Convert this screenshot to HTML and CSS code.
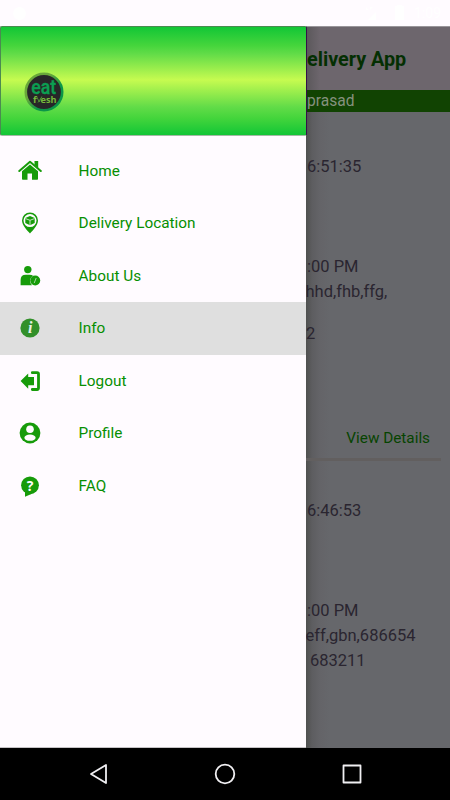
FILE: index.html
```html
<!DOCTYPE html>
<html lang="en">
<head>
<meta charset="utf-8">
<title>Delivery App</title>
<link rel="stylesheet" href="styles.css">
</head>
<body>
<div class="status">
  <i class="dot"></i>
  <svg class="signals" viewBox="0 0 44 20"><path d="M2 4v3h3M6 7V4h3M12 9v8H4zM31 3v14h9V3h-2V2h-5v1z"/></svg>
  <span>1:09</span>
</div>
<div class="screen">
  <aside class="drawer">
    <header class="banner">
      <svg class="logo" viewBox="0 0 40 40">
        <defs><linearGradient id="ring" x1="0" y1="0" x2="1" y2="1"><stop offset=".35" stop-color="#69a83a"/><stop offset=".65" stop-color="#0b9648"/></linearGradient></defs>
        <circle cx="20" cy="20" r="18.2" fill="#272628" stroke="url(#ring)" stroke-width="2.6"/>
        <text class="eat" x="7.300" y="21.600" textLength="24.800" lengthAdjust="spacingAndGlyphs">eat</text>
        <text class="fresh" x="9" y="31">f</text>
        <text class="fresh" x="16.500" y="31" textLength="16" lengthAdjust="spacingAndGlyphs">esh</text>
        <path d="M12.800 25l2.500 5 2.500-5.500M14 30.500l3.500-5" fill="none" stroke="#4c8a35" stroke-width="1"/>
      </svg>
    </header>
    <nav class="menu">
      <a class="item"><svg viewBox="0 0 24 24"><path d="M4 12.300v7.700q0 .8.800.8h4.700v-6.300h4.500v6.300h5.200q.8 0 .8-.8v-7.700L12 5.500z"/><path d="M16.500 2h3.700v7.500L16.500 6z"/><path d="M1.300 12L12 2.800 22.800 12" fill="none" stroke="#179b0a" stroke-width="2" stroke-linecap="round" stroke-linejoin="round"/></svg><span>Home</span></a>
      <a class="item"><svg viewBox="0 0 24 24"><path fill-rule="evenodd" d="M12 1.400a8 8 0 0 0-8 8c0 5 5.500 10 8 13 2.500-3 8-8 8-13a8 8 0 0 0-8-8zm0 1.700a6.500 6.500 0 1 1 0 13 6.500 6.500 0 0 1 0-13z"/><path d="M12 5l4.700 1.900v5L12 14.300l-4.700-2.400v-5z"/><path d="M7.300 7.500L12 9.300l4.700-1.800M12 9.300v5" fill="none" stroke="#d5efd2" stroke-width=".9"/></svg><span>Delivery Location</span></a>
      <a class="item"><svg viewBox="0 0 24 24"><circle cx="9.800" cy="5.600" r="3.700"/><path d="M2.600 21.200V16q0-5.300 5.200-5.300h3.700q2.500 0 3.800 1.400-3.300 1.500-3.300 4.800 0 2.500 2 4.300z"/><circle cx="17.200" cy="16.500" r="5"/><path d="M18.200 14l-2 5" stroke="#a5d89f" stroke-width="1"/></svg><span>About Us</span></a>
      <a class="item selected"><svg viewBox="0 0 24 24"><circle cx="12" cy="12" r="9.600"/><text class="info" x="12.200" y="17.300">i</text></svg><span>Info</span></a>
      <a class="item"><svg viewBox="0 0 24 24"><path d="M2.600 12l7.600-7.600v3.600h5.800v8.200h-5.800v3.600z"/><path d="M14.300 3.700h4.800q1.400 0 1.400 1.400v14q0 1.400-1.400 1.400h-4.800" fill="none" stroke="#179b0a" stroke-width="2.800" stroke-linecap="round"/></svg><span>Logout</span></a>
      <a class="item"><svg viewBox="0 0 24 24"><circle cx="12" cy="12" r="10.400"/><circle cx="12" cy="8.300" r="3.800" fill="#fffbff"/><ellipse cx="12" cy="16.700" rx="5.600" ry="3.100" fill="#fffbff"/></svg><span>Profile</span></a>
      <a class="item"><svg viewBox="0 0 24 24"><circle cx="12" cy="11.300" r="8.900"/><path d="M7 17.500v5.200l7-3z"/><text class="question" x="12" y="16.700">?</text></svg><span>FAQ</span></a>
    </nav>
  </aside>
  <main class="page">
    <h1>elivery App</h1>
    <div class="user">prasad</div>
    <section class="order first">
      <p class="time">6:51:35</p>
      <p class="slot">:00 PM</p>
      <p class="tight">hhd,fhb,ffg,</p>
      <p class="pin">2</p>
      <a class="details">View Details</a>
    </section>
    <section class="order">
      <p class="time">6:46:53</p>
      <p class="slot">:00 PM</p>
      <p class="tight">eff,gbn,686654</p>
      <p class="indent">683211</p>
    </section>
  </main>
</div>
<footer class="navbar">
  <svg viewBox="0 0 24 24"><path d="M4 12l15-9v18z"/></svg>
  <svg viewBox="0 0 24 24"><circle cx="12" cy="12" r="9.300"/></svg>
  <svg viewBox="0 0 24 24"><rect x="3.500" y="3.500" width="17" height="17"/></svg>
</footer>
</body>
</html>
```

FILE: styles.css
```css
* { box-sizing: border-box; }
body {
  margin: 0;
  width: 450px;
  height: 800px;
  overflow: hidden;
  display: flex;
  flex-direction: column;
  background: #fffbff;
  font-family: Roboto, sans-serif;
}
.status {
  height: 26px;
  flex: none;
  display: flex;
  align-items: center;
  padding: 0 9px 0 13px;
  color: #fff;
  font-size: 14px;
}
.dot { width: 13px; height: 13px; border-radius: 50%; background: #fff; margin-right: auto; }
.signals { width: 44px; height: 20px; fill: #fff; margin-right: 6px; }
.screen { height: 722px; display: grid; grid-template-columns: 306px 144px; }
.drawer { background: #fffbff; min-width: 0; border-bottom: 1px solid #c5c2c5; }
.banner {
  width: 307px;
  position: relative;
  height: 110px;
  padding: 45px 0 0 23px;
  border: 1px solid #4b8a50;
  border-right-color: #35104a;
  border-bottom-color: #a5b8a5;
  border-radius: 2px;
  background: linear-gradient(#12c636, #45d53c 17%, #62dc48 25%, #c6fb50 49%, #62dc48 74%, #45d53c 84%, #12c636);
}
.logo { display: block; width: 40px; height: 40px; }
.eat { font: 500 20.5px Roboto, sans-serif; fill: #0b9e52; stroke: #0b9e52; stroke-width: .4; }
.fresh { font: 700 9.5px "Open Sans", sans-serif; fill: #75b83c; }
.menu { padding-top: 8.6px; }
.item {
  height: 52.5px;
  display: flex;
  align-items: center;
  padding-left: 18px;
  gap: 36.6px;
  color: #078f02;
  font-size: 15.35px;
}
.item svg { width: 24px; height: 24px; fill: #179b0a; flex: none; }
.selected { background: #dfdfdf; }
.selected svg { fill: #32902a; }
.info { font: italic 700 16px "Liberation Serif", serif; fill: #e9f1e8; text-anchor: middle; }
.question { font: 700 14px "Open Sans", sans-serif; fill: #fffbff; text-anchor: middle; }
.page {
  overflow: hidden;
  border-top: 1px solid #99959a;
  background: linear-gradient(90deg, #4f504f, #5d5d60 6px, #646468 14px, #66676b 24px);
  color: #2a2530;
}
.page h1 {
  margin: 0;
  height: 63px;
  line-height: 65px;
  padding-left: 1px;
  font-size: 19.8px;
  font-weight: 700;
  color: #042f02;
  background: linear-gradient(90deg, #5a575a, #6d666d 14px);
}
.user {
  height: 22px;
  line-height: 22px;
  padding-left: 1px;
  font-size: 15.6px;
  color: #85917e;
  background: #114302;
}
.order { padding: 37px 9px 0 1px; }
.order.first { height: 349px; padding-top: 42px; border-bottom: 3px solid #625f5f; margin-right: 9px; padding-right: 0; }
.order p { margin: 0; height: 25px; line-height: 25px; font-size: 16.5px; white-space: nowrap; }
.order .slot { margin-top: 75px; }
.order .pin { margin-top: 17px; margin-left: -1px; }
.order .tight { margin-left: -1.500px; }
.order .indent { padding-left: 3px; }
.details {
  display: block;
  margin: 80px 11px 0 0;
  line-height: 24px;
  text-align: right;
  font-size: 15.3px;
  color: #064401;
}
.navbar {
  height: 52px;
  background: #000;
  display: flex;
  align-items: center;
  justify-content: center;
  gap: 102.5px;
}
.navbar svg { width: 24px; height: 24px; fill: none; stroke: #f0eff2; stroke-width: 1.8; stroke-linejoin: round; }
```
